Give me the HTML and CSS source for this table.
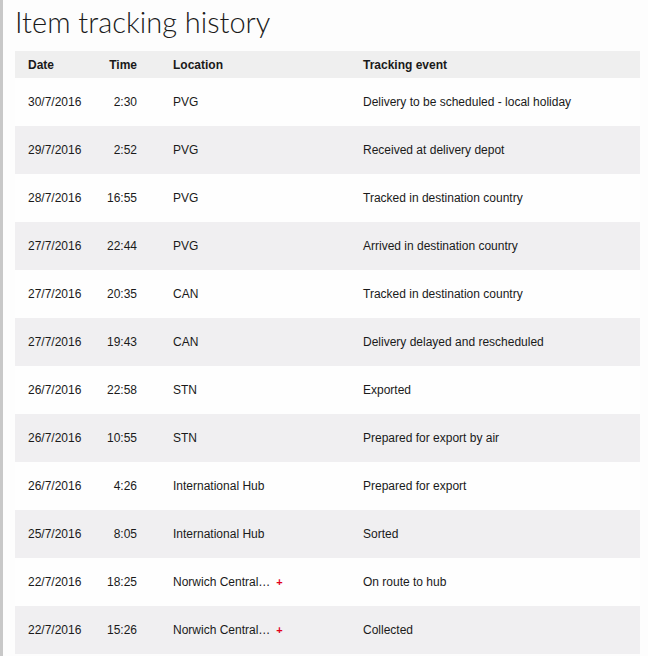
FILE: index.html
```html
<!DOCTYPE html>
<html>
<head>
<meta charset="utf-8">
<link rel="stylesheet" href="styles.css">
</head>
<body>
<div class="page">
  <h1 class="title">Item tracking history</h1>
  <table class="history">
    <colgroup>
      <col class="c-date"><col class="c-time"><col class="c-loc"><col class="c-event">
    </colgroup>
    <thead>
      <tr><th class="date">Date</th><th class="time">Time</th><th class="loc">Location</th><th class="event">Tracking event</th></tr>
    </thead>
    <tbody>
      <tr><td class="date">30/7/2016</td><td class="time">2:30</td><td class="loc">PVG</td><td class="event">Delivery to be scheduled - local holiday</td></tr>
      <tr><td class="date">29/7/2016</td><td class="time">2:52</td><td class="loc">PVG</td><td class="event">Received at delivery depot</td></tr>
      <tr><td class="date">28/7/2016</td><td class="time">16:55</td><td class="loc">PVG</td><td class="event">Tracked in destination country</td></tr>
      <tr><td class="date">27/7/2016</td><td class="time">22:44</td><td class="loc">PVG</td><td class="event">Arrived in destination country</td></tr>
      <tr><td class="date">27/7/2016</td><td class="time">20:35</td><td class="loc">CAN</td><td class="event">Tracked in destination country</td></tr>
      <tr><td class="date">27/7/2016</td><td class="time">19:43</td><td class="loc">CAN</td><td class="event">Delivery delayed and rescheduled</td></tr>
      <tr><td class="date">26/7/2016</td><td class="time">22:58</td><td class="loc">STN</td><td class="event">Exported</td></tr>
      <tr><td class="date">26/7/2016</td><td class="time">10:55</td><td class="loc">STN</td><td class="event">Prepared for export by air</td></tr>
      <tr><td class="date">26/7/2016</td><td class="time">4:26</td><td class="loc">International Hub</td><td class="event">Prepared for export</td></tr>
      <tr><td class="date">25/7/2016</td><td class="time">8:05</td><td class="loc">International Hub</td><td class="event">Sorted</td></tr>
      <tr><td class="date">22/7/2016</td><td class="time">18:25</td><td class="loc">Norwich Central…<span class="more">+</span></td><td class="event">On route to hub</td></tr>
      <tr><td class="date">22/7/2016</td><td class="time">15:26</td><td class="loc">Norwich Central…<span class="more">+</span></td><td class="event">Collected</td></tr>
    </tbody>
  </table>
</div>
</body>
</html>
```

FILE: styles.css
```css
html, body {
  margin: 0;
  padding: 0;
  background: #fdfdfd;
}
.page {
  border-left: 3px solid #c8c8c8;
  padding: 0 8px 0 12px;
  min-height: 656px;
  box-sizing: border-box;
  font-family: "Liberation Sans", Arial, sans-serif;
  color: #1a1a1a;
}
.title {
  margin: 0;
  padding-top: 2px;
  height: 49px;
  font-family: Lato, "Open Sans", sans-serif;
  font-weight: 300;
  font-size: 29px;
  line-height: 40px;
  color: #1a1a1a;
}
.history {
  width: 625px;
  border-collapse: collapse;
  table-layout: fixed;
  font-size: 12px;
}
.c-date { width: 80px; }
.c-time { width: 55px; }
.c-loc { width: 200px; }
.c-event { width: 290px; }
.history th {
  background: #efefef;
  font-weight: bold;
  text-align: left;
  height: 27px;
  padding: 0;
  vertical-align: middle;
}
.history td {
  height: 48px;
  padding: 0;
  vertical-align: middle;
  white-space: nowrap;
}
.history tbody tr:nth-child(even) td {
  background: #f0eff1;
}
.history tbody tr:nth-child(odd) td {
  background: #fefefe;
}
.history .date { padding-left: 13px; }
.history .time { text-align: right; padding-right: 13px; }
.history .loc { padding-left: 23px; }
.history .event { padding-left: 13px; }
.history .more {
  display: inline-block;
  color: #e2001a;
  font-weight: bold;
  font-size: 11px;
  margin-left: 6px;
}
```
